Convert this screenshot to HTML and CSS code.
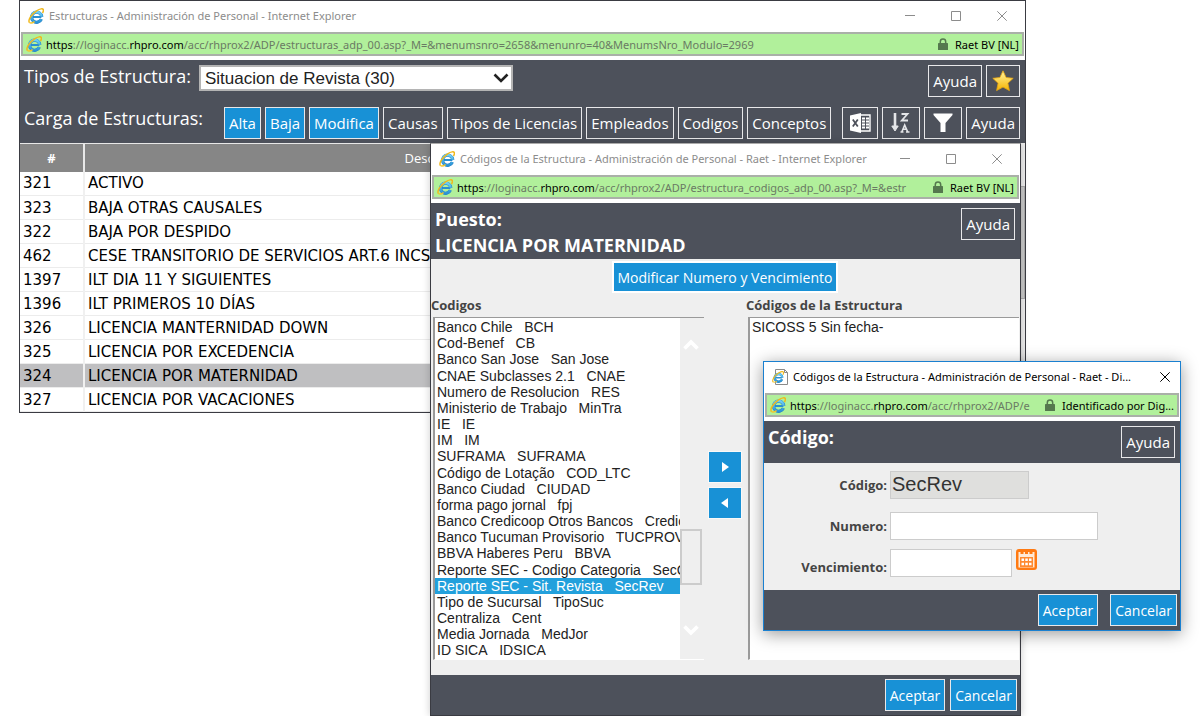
FILE: index.html
```
<!DOCTYPE html>
<html lang="es">
<head>
<meta charset="utf-8">
<title>Administración de Personal</title>
<link rel="stylesheet" href="styles.css">
</head>
<body>
<svg class="symbols" aria-hidden="true">
  <defs>
    <linearGradient id="ie-blue" x1="0" y1="0" x2="0" y2="1"><stop offset="0" stop-color="#6fd0f7"/><stop offset="1" stop-color="#2b93d6"/></linearGradient>
    <linearGradient id="gold" x1="0" y1="0" x2="0" y2="1"><stop offset="0" stop-color="#fff3a0"/><stop offset="1" stop-color="#f5b400"/></linearGradient>
  </defs>
  <symbol id="ie" viewBox="0 0 16 16">
    <path d="M13.400 9H5" stroke="#2b8fd0" stroke-width="2" fill="none"/>
    <path d="M13.400 11.200A5.100 5.100 0 1 1 13.800 8.800" stroke="#2583c4" stroke-width="3.200" fill="none"/>
    <path d="M13.300 11.100A5.100 5.100 0 1 1 13.700 8.800" stroke="url(#ie-blue)" stroke-width="2.400" fill="none"/>
    <path d="M1.600 14.800C-.6 12.600 3.400 6 8.600 2.800 12 .6 15 .2 15.400 1.800c.2.9-.2 2-.9 3.200" stroke="#f0b81c" stroke-width="1.500" fill="none"/>
    <path d="M1.600 14.600c1.200.9 3.400 0 5-1" stroke="#f4c52c" stroke-width="1.300" fill="none"/>
  </symbol>
  <symbol id="lock" viewBox="0 0 10 12"><path d="M2.300 6V3.800a2.700 2.700 0 0 1 5.400 0V6" stroke="#55784e" stroke-width="1.500" fill="none"/><rect x="0" y="5" width="10" height="7" rx=".6" fill="#55784e"/></symbol>
  <symbol id="min" viewBox="0 0 10 10"><path d="M0 4.500h10" stroke="currentColor"/></symbol>
  <symbol id="max" viewBox="0 0 10 10"><path d="M.5.500h9v9h-9z" stroke="currentColor" fill="none"/></symbol>
  <symbol id="close" viewBox="0 0 10 10"><path d="M.3.300l9.400 9.400M9.700.300L.3 9.700" stroke="currentColor" fill="none"/></symbol>
</svg>

<main class="desktop">
  <section class="window window-main" aria-label="Estructuras">
    <header class="titlebar">
      <svg class="ie"><use href="#ie"/></svg>
      <h1 class="title">Estructuras - Administración de Personal - Internet Explorer</h1>
      <span class="controls">
        <button aria-label="Minimizar"><svg><use href="#min"/></svg></button>
        <button aria-label="Maximizar"><svg><use href="#max"/></svg></button>
        <button aria-label="Cerrar"><svg><use href="#close"/></svg></button>
      </span>
    </header>
    <div class="address">
      <svg class="ie"><use href="#ie"/></svg>
      <span class="url"><b>https</b>://loginacc.<b>rhpro.com</b>/acc/rhprox2/ADP/estructuras_adp_00.asp?_M=&amp;menumsnro=2658&amp;menunro=40&amp;MenumsNro_Modulo=2969</span>
      <svg class="lock"><use href="#lock"/></svg>
      <span class="owner">Raet BV [NL]</span>
    </div>
    <div class="toolbar">
      <div class="tool-row">
        <label class="heading" for="tipo">Tipos de Estructura:</label>
        <span class="dropdown">
          <select id="tipo"><option>Situacion de Revista (30)</option></select>
          <svg viewBox="0 0 16 10"><path d="M1.500 1.500L8 8l6.500-6.500" stroke="#222" stroke-width="2.600" fill="none"/></svg>
        </span>
        <span class="spacer"></span>
        <button class="btn">Ayuda</button>
        <button class="btn btn-star" aria-label="Favoritos"><svg viewBox="0 0 22 22"><path d="M11 .8l3.100 6.700 7.100.8-5.300 4.900 1.500 7.400L11 17.100l-6.400 3.500 1.500-7.400L.8 8.300l7.100-.8z" fill="url(#gold)" stroke="#e6a412" stroke-width=".8" stroke-linejoin="round"/></svg></button>
      </div>
      <div class="tool-row">
        <span class="heading heading-load">Carga de Estructuras:</span>
        <button class="btn btn-blue">Alta</button>
        <button class="btn btn-blue">Baja</button>
        <button class="btn btn-blue">Modifica</button>
        <button class="btn">Causas</button>
        <button class="btn">Tipos de Licencias</button>
        <button class="btn">Empleados</button>
        <button class="btn">Codigos</button>
        <button class="btn">Conceptos</button>
        <span class="spacer"></span>
        <button class="btn btn-icon btn-excel" aria-label="Excel"><svg viewBox="0 0 22 22"><path d="M1 3.500L12 1v20L1 18.500z" fill="#fff"/><path d="M3.800 7.500l5 7M8.800 7.500l-5 7" stroke="#4d515b" stroke-width="1.800"/><path d="M12 3h9v16h-9" fill="none" stroke="#fff" stroke-width="1.400"/><path d="M13 6.500h3M17 6.500h3M13 9.500h3M17 9.500h3M13 12.500h3M17 12.500h3M13 15.500h3M17 15.500h3" stroke="#fff" stroke-width="1.800"/></svg></button>
        <button class="btn btn-icon" aria-label="Ordenar"><svg viewBox="0 0 22 22" fill="none" stroke="#e4e5e8"><path d="M5 1v16" stroke-width="2.600"/><path d="M1.800 14L5 19l3.200-5z" fill="#e4e5e8"/><path d="M11.500 2h6L11.800 8.500h6.200" stroke-width="1.800"/><path d="M10.500 20h3M16 20h3.500M12 19.500l2.700-6.500 2.800 6.500M13 17.300h3.800" stroke-width="1.600"/></svg></button>
        <button class="btn btn-icon" aria-label="Filtrar"><svg viewBox="0 0 22 22"><path d="M1.500 1.500h19v1.500l-7 8V20h-5v-9l-7-8z" fill="#fff"/></svg></button>
        <button class="btn">Ayuda</button>
      </div>
    </div>
    <div class="grid-area">
      <table class="grid">
        <colgroup><col class="col-id"><col class="col-desc"><col></colgroup>
        <thead><tr><th><b>#</b></th><th>Descripción</th><th></th></tr></thead>
        <tbody>
          <tr><td>321</td><td>ACTIVO</td><td></td></tr>
          <tr><td>323</td><td>BAJA OTRAS CAUSALES</td><td></td></tr>
          <tr><td>322</td><td>BAJA POR DESPIDO</td><td></td></tr>
          <tr><td>462</td><td>CESE TRANSITORIO DE SERVICIOS ART.6 INCS</td><td></td></tr>
          <tr><td>1397</td><td>ILT DIA 11 Y SIGUIENTES</td><td></td></tr>
          <tr><td>1396</td><td>ILT PRIMEROS 10 DÍAS</td><td></td></tr>
          <tr><td>326</td><td>LICENCIA MANTERNIDAD DOWN</td><td></td></tr>
          <tr><td>325</td><td>LICENCIA POR EXCEDENCIA</td><td></td></tr>
          <tr class="selected"><td>324</td><td>LICENCIA POR MATERNIDAD</td><td></td></tr>
          <tr><td>327</td><td>LICENCIA POR VACACIONES</td><td></td></tr>
        </tbody>
      </table>
      <div class="page-scroll"><span></span></div>
    </div>
  </section>

  <section class="window window-codes" aria-label="Códigos de la Estructura">
    <header class="titlebar">
      <svg class="ie"><use href="#ie"/></svg>
      <h2 class="title">Códigos de la Estructura - Administración de Personal - Raet - Internet Explorer</h2>
      <span class="controls">
        <button aria-label="Minimizar"><svg><use href="#min"/></svg></button>
        <button aria-label="Maximizar"><svg><use href="#max"/></svg></button>
        <button aria-label="Cerrar"><svg><use href="#close"/></svg></button>
      </span>
    </header>
    <div class="address">
      <svg class="ie"><use href="#ie"/></svg>
      <span class="url"><b>https</b>://loginacc.<b>rhpro.com</b>/acc/rhprox2/ADP/estructura_codigos_adp_00.asp?_M=&amp;estr</span>
      <svg class="lock"><use href="#lock"/></svg>
      <span class="owner">Raet BV [NL]</span>
    </div>
    <div class="band">
      <h3>Puesto:<br>LICENCIA POR MATERNIDAD</h3>
      <button class="btn">Ayuda</button>
    </div>
    <div class="codes-body">
      <button class="btn btn-blue btn-modify">Modificar Numero y Vencimiento</button>
      <div class="picker">
        <div class="picker-col">
          <label for="disponibles">Codigos</label>
          <div class="listbox">
            <select id="disponibles" multiple size="21">
              <option>Banco Chile&nbsp;&nbsp; BCH</option>
              <option>Cod-Benef&nbsp;&nbsp; CB</option>
              <option>Banco San Jose&nbsp;&nbsp; San Jose</option>
              <option>CNAE Subclasses 2.1&nbsp;&nbsp; CNAE</option>
              <option>Numero de Resolucion&nbsp;&nbsp; RES</option>
              <option>Ministerio de Trabajo&nbsp;&nbsp; MinTra</option>
              <option>IE&nbsp;&nbsp; IE</option>
              <option>IM&nbsp;&nbsp; IM</option>
              <option>SUFRAMA&nbsp;&nbsp; SUFRAMA</option>
              <option>Código de Lotação&nbsp;&nbsp; COD_LTC</option>
              <option>Banco Ciudad&nbsp;&nbsp; CIUDAD</option>
              <option>forma pago jornal&nbsp;&nbsp; fpj</option>
              <option>Banco Credicoop Otros Bancos&nbsp;&nbsp; Credicoop</option>
              <option>Banco Tucuman Provisorio&nbsp;&nbsp; TUCPROV</option>
              <option>BBVA Haberes Peru&nbsp;&nbsp; BBVA</option>
              <option>Reporte SEC - Codigo Categoria&nbsp;&nbsp; SecCat</option>
              <option selected>Reporte SEC - Sit. Revista&nbsp;&nbsp; SecRev</option>
              <option>Tipo de Sucursal&nbsp;&nbsp; TipoSuc</option>
              <option>Centraliza&nbsp;&nbsp; Cent</option>
              <option>Media Jornada&nbsp;&nbsp; MedJor</option>
              <option>ID SICA&nbsp;&nbsp; IDSICA</option>
            </select>
            <div class="scroll">
              <svg viewBox="0 0 16 12"><path d="M1.500 10.500L8 4l6.500 6.500" stroke="#fff" stroke-width="3.600" fill="none"/></svg>
              <span class="thumb"></span>
              <svg viewBox="0 0 16 12"><path d="M1.500 1.500L8 8l6.500-6.500" stroke="#fff" stroke-width="3.600" fill="none"/></svg>
            </div>
          </div>
        </div>
        <div class="transfer">
          <button aria-label="Agregar"><svg viewBox="0 0 8 10"><path d="M1 0l7 5-7 5z"/></svg></button>
          <button aria-label="Quitar"><svg viewBox="0 0 8 10"><path d="M7 0L0 5l7 5z"/></svg></button>
        </div>
        <div class="picker-col">
          <label for="asignados">Códigos de la Estructura</label>
          <div class="listbox">
            <select id="asignados" multiple size="21"><option>SICOSS 5 Sin fecha-</option></select>
          </div>
        </div>
      </div>
    </div>
    <footer class="footer">
      <button class="btn btn-blue">Aceptar</button>
      <button class="btn btn-blue">Cancelar</button>
    </footer>
  </section>

  <section class="window window-edit" aria-label="Código">
    <header class="titlebar">
      <svg class="ie" viewBox="0 0 16 16"><path d="M3.500.500h9l3 3v12h-12z" fill="#fff" stroke="#8a8a8a"/><path d="M12.500.500v3h3" fill="none" stroke="#8a8a8a"/><use href="#ie" x="0" y="2" width="12" height="12"/></svg>
      <h2 class="title">Códigos de la Estructura - Administración de Personal - Raet - Di...</h2>
      <span class="controls"><button aria-label="Cerrar"><svg><use href="#close"/></svg></button></span>
    </header>
    <div class="address">
      <svg class="ie"><use href="#ie"/></svg>
      <span class="url"><b>https</b>://loginacc.<b>rhpro.com</b>/acc/rhprox2/ADP/e</span>
      <svg class="lock"><use href="#lock"/></svg>
      <span class="owner">Identificado por Dig...</span>
    </div>
    <div class="band">
      <h3>Código:</h3>
      <button class="btn">Ayuda</button>
    </div>
    <form class="form">
      <label for="codigo">Código:</label>
      <div class="field"><input id="codigo" class="input-code" value="SecRev" readonly></div>
      <label for="numero">Numero:</label>
      <div class="field"><input id="numero" class="input-number"></div>
      <label for="vencimiento">Vencimiento:</label>
      <div class="field field-date">
        <input id="vencimiento" class="input-date">
        <button type="button" class="calendar" aria-label="Calendario"><svg viewBox="0 0 21 21"><rect width="21" height="21" rx="3" fill="#ff7a12"/><path d="M2.500 3h2v2h3V3h1.500v2h3V3h1.500v2h3V3h2v15.500h-16z" fill="#ffe9d6"/><rect x="4" y="8" width="13" height="10" fill="#ff8a30"/><path d="M5.500 9.500h2.500v2.500H5.500zM9.300 9.500h2.500v2.500H9.300zM13 9.500h2.500v2.500H13zM5.500 13.700h2.500v2.500H5.500zM9.300 13.700h2.500v2.500H9.300zM13 13.700h2.500v2.500H13z" fill="#fff"/></svg></button>
      </div>
    </form>
    <footer class="footer">
      <button class="btn btn-blue">Aceptar</button>
      <button class="btn btn-blue">Cancelar</button>
    </footer>
  </section>
</main>
</body>
</html>
```
FILE: styles.css
```
* { box-sizing: border-box; }

body {
  margin: 0;
  background: #fff;
  color: #000;
  font-family: "Open Sans", "Noto Sans", sans-serif;
  font-size: 14px;
}

button, input, select { font: inherit; margin: 0; border-radius: 0; }
button { padding: 0; border: 0; background: none; }
h1, h2, h3 { margin: 0; }
.symbols { position: absolute; width: 0; height: 0; }

.desktop { position: relative; min-height: 100vh; overflow: hidden; }

.window {
  position: absolute;
  display: flex;
  flex-direction: column;
  background: #fff;
}
.window-main {
  top: 0; left: 19px; right: 174px;
  border: 1px solid #3a3b42;
}
.window-codes {
  top: 143px; left: 430px; right: 179px;
  border: 1px solid #3a3b42;
  border-top-color: #aaa;
  box-shadow: 0 0 8px rgba(0, 0, 0, .2);
}
.window-edit {
  top: 361px; left: 763px; right: 19px;
  border: 1px solid #1a80d0;
  box-shadow: 0 3px 16px rgba(0, 0, 0, .4);
}

/* Browser chrome */
.titlebar {
  display: flex;
  align-items: center;
  height: 31px;
  padding: 0 0 2px 8px;
  color: #8c8c8c;
}
.ie { flex: none; width: 16px; height: 16px; }
.title {
  flex: 1;
  min-width: 0;
  margin-left: 5px;
  overflow: hidden;
  white-space: nowrap;
  font-family: "Noto Sans", sans-serif;
  font-size: 11px;
  font-weight: 400;
}
.controls { display: flex; }
.controls button { display: grid; place-items: center; width: 46px; height: 29px; color: #8c8c8c; }
.controls svg { width: 10px; height: 10px; }
.window-edit .title { color: #000; }
.window-edit .controls button { width: 30px; color: #000; }

.address {
  display: flex;
  align-items: center;
  height: 24px;
  margin: 0 1px 4px;
  padding: 0 3px;
  border: 2px solid #aab0a8;
  background: #b1f09b;
  font-family: "Noto Sans", sans-serif;
  font-size: 11px;
}
.url {
  flex: 1;
  min-width: 0;
  margin-left: 4px;
  overflow: hidden;
  white-space: nowrap;
  color: #6a7a64;
}
.url b { color: #000; font-weight: 400; }
.lock { flex: none; width: 10px; height: 12px; margin: 0 7px 0 10px; }
.owner { white-space: nowrap; }

/* Shared buttons */
.btn {
  flex: none;
  height: 32px;
  padding: 0 4px;
  border: 1px solid #e8e8ea;
  color: #fff;
  font-size: 15px;
  white-space: nowrap;
}
.btn-blue { background: #1891d6; }
.btn svg { display: block; width: 22px; height: 22px; margin: auto; }
.btn-star { width: 34px; }
.btn-icon { width: 38px; }
.btn-excel { width: 36px; }

/* Main window */
.toolbar { display: flex; flex-direction: column; gap: 10px; padding: 5px 5px 4px 4px; background: #4d515b; }
.tool-row { display: flex; align-items: flex-start; gap: 4px; }
.heading { flex: none; color: #fff; font-size: 18px; line-height: 22px; }
.heading-load { width: 196px; }
.spacer { flex: 1; }
.dropdown { display: grid; align-items: center; width: 314px; margin-left: 4px; }
.dropdown select, .dropdown svg { grid-area: 1 / 1; }
.dropdown select {
  appearance: none;
  height: 26px;
  padding: 0 4px;
  border: 2px solid #b4b4b4;
  background: #fff;
  color: #222;
  font-family: "Liberation Sans", Arial, sans-serif;
  font-size: 17px;
}
.dropdown svg { justify-self: end; width: 16px; height: 10px; margin-right: 4px; pointer-events: none; }

.grid-area { display: flex; }
.grid { flex: 1; border-collapse: collapse; table-layout: fixed; font-family: "DejaVu Sans", Verdana, sans-serif; font-size: 15px; }
.col-id { width: 64px; }
.col-desc { width: 712px; }
.grid th {
  height: 28px;
  padding: 0;
  border-right: 2px solid #e8e8e8;
  border-top: 1px solid #e8e8e8;
  background: #868686;
  color: #fff;
  font-family: "Open Sans", sans-serif;
  font-size: 13px;
  font-weight: 400;
}
.grid td {
  height: 24px;
  padding: 0 3px;
  border-right: 2px solid #f0f0f0;
  border-bottom: 1px solid #ececec;
  line-height: 20px;
  white-space: nowrap;
}
.grid .selected td { background: #bfbfc1; }
.page-scroll { width: 17px; padding-top: 43px; background: #ececec; }
.page-scroll span { display: block; height: 113px; border: 1px solid #aaa; background: #c8c8c8; }

/* Bands and footers of the dialogs */
.band {
  display: flex;
  justify-content: space-between;
  align-items: flex-start;
  padding: 5px 5px 5px 4px;
  background: #4d515b;
  color: #fff;
}
.band h3 { font-size: 18px; line-height: 26px; }
.window-codes .band { padding-top: 3px; padding-bottom: 1px; }
.window-codes .band .btn { margin-top: 2px; }
.window-edit .band h3 { line-height: 22px; }
.footer {
  display: flex;
  justify-content: flex-end;
  gap: 5px;
  padding: 4px 3px;
  background: #4d515b;
}
.footer .btn, .btn-modify { font-size: 14px; }
.window-edit .footer { gap: 12px; }

/* Code picker */
.codes-body { display: flex; flex-direction: column; background: #efefef; padding: 2px 1px 15px 0; }
.btn-modify { align-self: center; border: 2px solid #fff; }
.picker { display: flex; }
.picker-col { flex: 1; min-width: 0; }
.picker-col label { display: block; height: 24px; line-height: 24px; font-size: 13px; font-weight: 700; color: #444; }
.listbox {
  display: flex;
  margin-left: 2px;
  border-top: 1px solid #9a9a9a;
  border-left: 2px solid #9a9a9a;
  border-bottom: 1px solid #fff;
}
.listbox select {
  flex: 1;
  min-width: 0;
  height: 341px;
  padding: 1px 0 0;
  border: 0;
  outline: 0;
  background: #fff;
  overflow: hidden;
  font-family: "Liberation Sans", Arial, sans-serif;
  font-size: 14px;
}
.listbox option { min-height: 16px; padding: 0 2px; color: #222; }
.listbox option:nth-child(6n + 3) { min-height: 17px; }
.listbox option:checked { background-image: linear-gradient(#22a0dc, #22a0dc); -webkit-text-fill-color: #fff; }
.scroll { display: flex; flex-direction: column; width: 24px; padding: 20px 2px 22px 0; }
.scroll svg { width: 16px; height: 12px; margin-left: 3px; }
.thumb { height: 56px; margin: auto 0 40px; border: 2px solid #ccc; background: #efefef; }
.transfer { display: flex; flex-direction: column; gap: 4px; padding: 158px 4px 0; }
.transfer button { display: grid; place-items: center; width: 34px; height: 32px; border: 1px solid #f8f8f8; background: #1891d6; }
.transfer svg { width: 8px; height: 10px; fill: #fff; }

/* Edit form */
.form {
  display: grid;
  grid-template-columns: 123px 1fr;
  grid-auto-rows: 41px;
  align-items: center;
  column-gap: 3px;
  padding: 1px 0 3px;
  background: #efefef;
}
.form label { text-align: right; font-weight: 700; font-size: 13px; color: #444; }
.field { display: flex; gap: 4px; }
.field input {
  height: 28px;
  padding: 0 1px;
  border: 1px solid #ccc;
  background: #fff;
  font-family: "Liberation Sans", Arial, sans-serif;
  font-size: 20px;
  color: #333;
}
.field .input-code { width: 139px; background: #dfdfdd; }
.input-number { width: 208px; }
.input-date { width: 122px; }
.field-date { align-self: start; padding-top: 3px; align-items: flex-start; }
.calendar svg { display: block; width: 21px; height: 21px; }
```
